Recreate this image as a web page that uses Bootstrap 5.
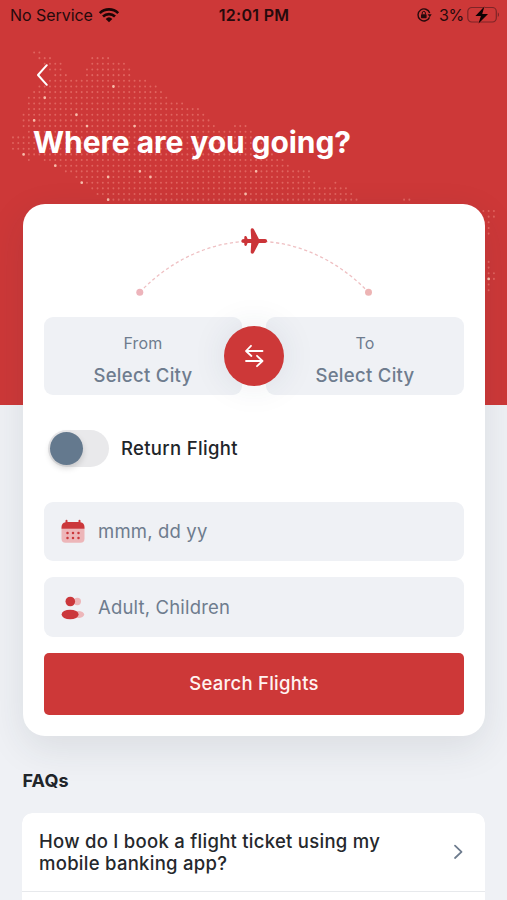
<!DOCTYPE html>
<html lang="en">
<head>
<meta charset="utf-8">
<meta name="viewport" content="width=device-width, initial-scale=1">
<title>Flight search</title>
<link href="https://cdn.jsdelivr.net/npm/bootstrap@5.3.0/dist/css/bootstrap.min.css" rel="stylesheet">
<style>
  :root { --brand: #cd3838; --slate: #6e7c8e; --field: #eff1f5; }
  body { font-family: Inter, "Liberation Sans", sans-serif; background: #eff1f5; color: #212529; height: 900px; overflow: hidden; }
  .screen { height: 900px; overflow: hidden; background: linear-gradient(var(--brand) 405px, transparent 405px); }
  .world { left: 0; top: 0; pointer-events: none; }
  .status { height: 30px; padding: 0 7px 0 10px; color: #260a0c; font-size: 16px; display: grid; grid-template-columns: 1fr auto 1fr; align-items: center; }
  .status .carrier { letter-spacing: -.05px; margin-right: 5px; }
  .status .clock { font-weight: 600; letter-spacing: .3px; margin-right: 2px; }
  .status .charge { letter-spacing: -.3px; margin: 0 3px 0 7px; }
  .back { margin: 31px 0 0 34px; width: 18px; height: 28px; }
  .headline { margin: 34px 0 0 33px; font-size: 30px; line-height: 38px; font-weight: 700; letter-spacing: -.08px; color: #fff; }
  .panel { margin: 43px 22px 0 23px; height: 532px; padding: 0 21px; border-radius: 22px; background: #fff; box-shadow: 0 12px 38px rgba(40,46,56,.1); }
  .route { height: 113.4px; }
  .route svg { margin: 20px 0 0 88px; }
  .city { height: 78px; border-radius: 9px; background: var(--field); color: var(--slate); padding-top: 14.5px; }
  .city-label { font-size: 16px; line-height: 22px; letter-spacing: .2px; }
  .city-name { font-size: 18.5px; line-height: 26px; font-weight: 500; letter-spacing: .3px; margin-top: 8px; }
  .swap { width: 60px; height: 60px; background: var(--brand); box-shadow: 0 0 34px rgba(40,60,90,.1); z-index: 1; }
  .toggle-row { margin-top: 34px; height: 38px; padding-left: 4px; font-size: 18.5px; font-weight: 500; letter-spacing: .32px; }
  .track { width: 61px; height: 37px; border-radius: 19px; background: #e9e9eb; padding: 2px; margin-right: 12px; }
  .knob { width: 33px; height: 33px; background: #64798e; box-shadow: 0 3px 6px rgba(0,0,0,.16); }
  .entry { height: 59.5px; border-radius: 9px; background: var(--field); color: var(--slate); font-size: 18.5px; letter-spacing: .17px; padding-left: 16px; padding-top: 1px; gap: 12px; }
  .date-entry { margin-top: 34.6px; }
  .go { height: 62px; border-radius: 5px; background: var(--brand); color: #fff3f1; font-size: 18.5px; font-weight: 500; letter-spacing: .25px; }
  .go:hover { background: #b92f2f; color: #fff; }
  .faq-title { margin: 32px 0 0 22.5px; font-size: 18px; line-height: 26px; font-weight: 700; letter-spacing: .15px; }
  .faqs { margin: 19px 22px 0 22px; border-radius: 10px 10px 0 0; }
  .faqs .list-group-item { border-color: #e7e9ec; border-width: 0 0 1px; padding: 0 19px 0 17px; height: 79px; color: #25282c; font-size: 18.5px; line-height: 22px; font-weight: 500; letter-spacing: .27px; }
</style>
</head>
<body>
<main class="screen position-relative">
  <svg class="world position-absolute" width="507" height="405" viewBox="0 0 507 405" aria-hidden="true">
    <g transform="translate(13 52.5) scale(5.285 5.66)" fill="none" stroke-linecap="round">
      <path stroke="#e0645f" stroke-width=".37" stroke-dasharray="0 1" d="M4 0H5.1M5 1H7.1M15 1H18.1M6 2H9.1M15 2H21.1M7 3H9.1M14 3H22.1M8 4H10.1M14 4H22.1M7 5H25.1M5 6H27.1M4 7H28.1M3 8H29.1M3 9H32.1M3 10H35.1M2 11H36.1M2 12H37.1M2 13H38.1M42 13H44.1M3 14H45.1M0 15H47.1M0 16H48.1M0 17H48.1M2 18H49.1M3 19H3.1M6 19H51.1M8 20H52.1M10 21H56.1M12 22H56.1M13 23H57.1M61 23H61.1M15 24H63.1M16 25H64.1M18 26H65.1M74 26H75.1M89 28H91.1M90 29H91.1M90 30H90.1M90 31H90.1M90 32H90.1M90 37H90.1M90 38H90.1M90 39H91.1M90 40H91.1M90 41H90.1M90 42H90.1"/>
      <path stroke="#f7bdab" stroke-width=".5" d="M19 6h.01M6 8h.01M12 11h.01M4 12h.01M14 13h.01M23 13h.01M2 18h.01M8 20h.01M24 21h.01M46 21h.01M18 22h.01M26 22h.01M13 23h.01M44 25h.01M18 26h.01M90 40h.01"/>
    </g>
  </svg>

  <header class="position-relative">
    <div class="status">
      <div class="d-flex align-items-center">
        <span class="carrier">No Service</span>
        <svg width="22" height="16" viewBox="0 0 22 16" fill="none" stroke="#1d0506" stroke-width="2.7">
          <path d="M1.8 6.1A13.3 13.3 0 0 1 20.2 6.1M5 9.5a8.7 8.7 0 0 1 12 0"/>
          <path d="M11 15.2 7.7 11.9a4.8 4.8 0 0 1 6.6 0Z" fill="#1d0506" stroke="none"/>
        </svg>
      </div>
      <span class="clock">12:01 PM</span>
      <div class="d-flex align-items-center justify-content-end">
        <svg width="16" height="16" viewBox="0 0 16 16" fill="none" stroke="#260a0c" stroke-width="1.4">
          <path d="M13.5 10.4A6 6 0 1 1 13.7 6"/>
          <path d="M11.7 7.3h4l-2 3z" fill="#260a0c" stroke="none"/>
          <rect x="5" y="7.2" width="5.6" height="4" rx=".7" fill="#260a0c" stroke="none"/>
          <path d="M6.2 7.4V6a1.6 1.6 0 0 1 3.2 0v1.4" stroke-width="1"/>
        </svg>
        <span class="charge">3%</span>
        <svg width="33" height="18" viewBox="0 0 33 18">
          <rect x=".8" y="1.5" width="28.5" height="14.5" rx="4" fill="none" stroke="#7e2527" stroke-width="1.2"/>
          <path d="M30.8 6.6c1.6.5 1.6 3.9 0 4.4z" fill="#7e2527"/>
          <path d="M17.4.6 8.4 10h5.5l-2.4 7.6L21 8h-5.8z" fill="#0d0203" stroke="#cd3838" stroke-width=".8" paint-order="stroke"/>
        </svg>
      </div>
    </div>
    <svg class="back d-block" viewBox="0 0 18 28" fill="none" stroke="#fff" stroke-width="2" stroke-linecap="round" stroke-linejoin="round"><path d="M12.8 4.2 4 14l8.8 9.8"/></svg>
    <h1 class="headline">Where are you going?</h1>
  </header>

  <section class="panel position-relative">
    <div class="route">
      <svg width="242" height="76" viewBox="132 224 242 76" fill="none">
        <path d="M139.8 292.3C205 224 303 224 368.5 292.3" stroke="#efc0c3" stroke-width="1.3" stroke-dasharray="3.2 2.6"/>
        <circle cx="139.8" cy="292.3" r="3.5" fill="#edb4bb"/>
        <circle cx="368.5" cy="292.3" r="3.5" fill="#edb4b4"/>
        <path d="M242.6 239.3l1.7-.2 0-1.7c0-1.6 2-1.8 2.5-.4l.8 2.1h3.6l-.5-9.1c0-2 2.4-2.3 3.3-.5l4.9 9.6h6.2c2.6 0 2.6 3.8 0 3.8h-6.2l-4.9 9.6c-.9 1.8-3.3 1.5-3.3-.5l.5-9.1h-3.6l-.8 2.1c-.5 1.4-2.5 1.2-2.5-.4v-1.7l-1.7-.2c-1.6-.5-1.6-2.9 0-3.4z" fill="#cb3438"/>
      </svg>
    </div>
    <div class="position-relative d-flex justify-content-between align-items-center">
      <div class="city flex-fill text-center">
        <div class="city-label">From</div>
        <div class="city-name">Select City</div>
      </div>
      <button class="swap btn rounded-circle border-0 p-0 position-absolute start-50 top-50 translate-middle" aria-label="Swap cities">
        <svg class="d-block mx-auto" width="22" height="26" viewBox="0 0 22 26" fill="none" stroke="#fff" stroke-width="1.8" stroke-linecap="round" stroke-linejoin="round"><path d="M19.5 8H3M8 2.8 3 8 8.4 13M3 18h16.5M14 12.8l5.5 5.2-5.5 5.2"/></svg>
      </button>
      <div class="mx-2 px-1"></div>
      <div class="city flex-fill text-center">
        <div class="city-label">To</div>
        <div class="city-name">Select City</div>
      </div>
    </div>
    <div class="toggle-row d-flex align-items-center">
      <div class="track" role="switch" aria-checked="false"><div class="knob rounded-circle"></div></div>
      <span>Return Flight</span>
    </div>
    <div class="entry date-entry d-flex align-items-center">
      <svg width="26" height="26" viewBox="0 0 26 26">
        <path d="M1.5 9.5h23v10.3a4 4 0 0 1-4 4h-15a4 4 0 0 1-4-4z" fill="#edb6b9"/>
        <path d="M1.5 9.8V8a5 5 0 0 1 4-4.7V1.8a1 1 0 0 1 2 0V3h11V1.8a1 1 0 0 1 2 0v1.5a5 5 0 0 1 4 4.7v1.8z" fill="#cb373b"/>
        <path d="M7.5 14h.01M13 14h.01M18.5 14h.01M7.5 18.9h.01M13 18.9h.01M18.5 18.9h.01" stroke="#cb373b" stroke-width="2.5" stroke-linecap="round"/>
      </svg>
      <span>mmm, dd yy</span>
    </div>
    <div class="entry d-flex align-items-center mt-3">
      <svg width="26" height="26" viewBox="0 0 26 26">
        <circle cx="17.3" cy="6.5" r="3.7" fill="#edb6b9"/><ellipse cx="18.2" cy="19.5" rx="6" ry="3.5" fill="#edb6b9"/>
        <circle cx="10.3" cy="6.5" r="4.8" fill="#cb373b"/><ellipse cx="10.1" cy="19.5" rx="8.5" ry="4.8" fill="#cb373b"/>
      </svg>
      <span>Adult, Children</span>
    </div>
    <button class="go btn w-100 mt-3 border-0">Search Flights</button>
  </section>

  <h2 class="faq-title">FAQs</h2>
  <div class="faqs list-group list-group-flush overflow-hidden">
    <a href="#" class="list-group-item d-flex align-items-center justify-content-between">
      <span>How do I book a flight ticket using my<br>mobile banking app?</span>
      <svg width="16" height="20" viewBox="0 0 16 20" fill="none" stroke="#6e7c8e" stroke-width="1.8" stroke-linecap="round" stroke-linejoin="round"><path d="M5 3.6l6.5 6.2L5 16"/></svg>
    </a>
    <a href="#" class="list-group-item"></a>
  </div>
</main>
<script src="https://cdn.jsdelivr.net/npm/bootstrap@5.3.0/dist/js/bootstrap.bundle.min.js"></script>
</body>
</html>
